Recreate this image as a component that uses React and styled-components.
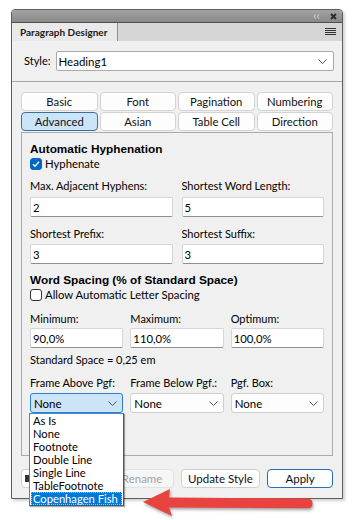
import React from "react";
import styled, { createGlobalStyle } from "styled-components";

const GlobalStyle = createGlobalStyle`
  html, body { margin: 0; padding: 0; background: #ffffff; }
  body { font-family: Lato, "Liberation Sans", sans-serif; font-size: 11px; color: #000; }
  * { box-sizing: border-box; }
`;

const Page = styled.div`
  position: relative;
  width: 353px;
  height: 520px;
  padding: 9px 0 0 11px;
  overflow: hidden;
`;

const Window = styled.div`
  width: 332px;
  height: 490px;
  border: 1px solid #5e5e5e;
  border-radius: 4px 4px 0 0;
  background: #f0f0f0;
  display: flex;
  flex-direction: column;
  box-shadow: 2px 2px 3px rgba(0, 0, 0, 0.18);
`;

const TitleBar = styled.div`
  height: 13px;
  background: linear-gradient(#a3a3a3, #898989);
  border-bottom: 1px solid #4f4f4f;
  border-radius: 3px 3px 0 0;
  display: flex;
  align-items: center;
  justify-content: flex-end;
  gap: 10px;
  padding-right: 5px;
`;

const TabStrip = styled.div`
  height: 18px;
  background: #d6d6d6;
  display: flex;
  align-items: stretch;
`;

const PanelTab = styled.div`
  width: 106px;
  background: #e9e9e9;
  border-right: 1px solid #8c8c8c;
  padding-left: 8px;
  display: flex;
  align-items: center;
  font-family: Lato, "Liberation Sans", sans-serif;
  font-weight: 700;
  font-size: 10px;
  color: #1a1a1a;
`;

const MenuButton = styled.div`
  margin-left: auto;
  margin-right: 6px;
  display: flex;
  align-items: center;
`;

const StyleRow = styled.div`
  display: flex;
  align-items: center;
  gap: 5px;
  padding: 10px 8px 10px 12px;
`;

const RowLabel = styled.span`
  line-height: 14px;
`;

const Combo = styled.div`
  flex: 1;
  height: 20px;
  background: #ffffff;
  border: 1px solid #a9a9a9;
  border-radius: 2px;
  display: flex;
  align-items: center;
  justify-content: space-between;
  padding: 0 6px 0 2px;
  font-size: 11.5px;
`;

const Separator = styled.div`
  height: 1px;
  background: #a8a8a8;
`;

const TabGrid = styled.div`
  display: grid;
  grid-template-columns: repeat(4, 1fr);
  grid-auto-rows: 19px;
  gap: 1px 2px;
  margin: 10px 9px 0;
`;

const TabButton = styled.div`
  border: 1px solid ${(p) => (p.$active ? "#3a6f9f" : "#d3d3d3")};
  background: ${(p) => (p.$active ? "#cce4f7" : "#fdfdfd")};
  border-radius: 4px;
  display: flex;
  align-items: center;
  justify-content: center;
  font-size: 11.3px;
  color: #111;
`;

const ContentBox = styled.div`
  margin: 1px 9px 0;
  height: 324px;
  border: 1px solid #ababab;
  padding: 9px 8px 0;
  display: flex;
  flex-direction: column;
`;

const Heading = styled.div`
  font-family: "Liberation Sans", Arial, sans-serif;
  font-weight: 700;
  font-size: 11.8px;
  line-height: 14px;
  margin-top: ${(p) => p.$mt || 0}px;
`;

const CheckRow = styled.label`
  display: flex;
  align-items: center;
  gap: 3px;
  line-height: 14px;
  margin-top: 1px;
  font-size: 11.3px;
`;

const Box = styled.span`
  width: 12px;
  height: 12px;
  border-radius: 3px;
  display: inline-flex;
  align-items: center;
  justify-content: center;
  background: ${(p) => (p.$checked ? "#0067c0" : "#ffffff")};
  border: 1px solid ${(p) => (p.$checked ? "#0067c0" : "#333333")};
`;

const FieldGrid = styled.div`
  display: grid;
  grid-template-columns: repeat(${(p) => p.$cols}, 1fr);
  column-gap: ${(p) => (p.$cols === 2 ? 9 : 7)}px;
  margin-top: ${(p) => p.$mt}px;
`;

const Field = styled.div`
  display: flex;
  flex-direction: column;
  position: relative;
`;

const FieldLabel = styled.span`
  line-height: 14px;
  white-space: nowrap;
`;

const TextBox = styled.div`
  height: 20px;
  margin-top: ${(p) => p.$gap}px;
  background: #ffffff;
  border: 1px solid #d6d6d6;
  border-bottom-color: #8f8f8f;
  border-radius: 2px;
  padding-left: 2px;
  display: flex;
  align-items: center;
  font-size: 11.3px;
`;

const SelectBox = styled.div`
  height: 20px;
  margin-top: 3px;
  background: ${(p) => (p.$open ? "#cce4f7" : "#fdfdfd")};
  border: 1px solid ${(p) => (p.$open ? "#2c7fd0" : "#d0d0d0")};
  border-radius: 3px;
  padding: 0 5px 0 3px;
  display: flex;
  align-items: center;
  justify-content: space-between;
  font-size: 11.5px;
`;

const PlainText = styled.div`
  line-height: 14px;
  margin-top: 5px;
`;

const DropList = styled.ul`
  position: absolute;
  top: 100%;
  left: -1px;
  width: 95px;
  margin: 0;
  padding: 0 1px;
  list-style: none;
  background: #ffffff;
  border: 1px solid #4a86c0;
  border-right-color: #2f5f8f;
  border-bottom-color: #2f5f8f;
  box-shadow: 1px 1px 1px rgba(0, 0, 0, 0.35);
  z-index: 5;
`;

const DropItem = styled.li`
  height: 13px;
  line-height: 13px;
  padding-left: 2px;
  font-size: 11.2px;
  white-space: nowrap;
  overflow: hidden;
  color: ${(p) => (p.$sel ? "#ffffff" : "#000000")};
  background: ${(p) => (p.$sel ? "#0078d7" : "transparent")};
  outline: ${(p) => (p.$sel ? "1px dotted #9fc8ee" : "none")};
  outline-offset: -1px;
`;

const ButtonRow = styled.div`
  display: flex;
  gap: 7px;
  margin: 13px 9px 0;
  height: 19px;
`;

const Button = styled.div`
  width: ${(p) => p.$w}px;
  height: 19px;
  border-radius: 4px;
  border: 1px solid ${(p) => (p.$primary ? "#2a6fb5" : p.$disabled ? "#e2e2e2" : "#d0d0d0")};
  background: ${(p) => (p.$disabled ? "#f6f6f6" : "#fefefe")};
  color: ${(p) => (p.$disabled ? "#a3a3a3" : "#111")};
  display: flex;
  align-items: center;
  justify-content: ${(p) => (p.$icon ? "flex-start" : "center")};
  padding-left: ${(p) => (p.$icon ? 2 : 0)}px;
  font-size: 11.5px;
`;

const Arrow = styled.svg`
  position: absolute;
  left: 136px;
  top: 483px;
  overflow: visible;
  filter: drop-shadow(1px 2px 1.5px rgba(0, 0, 0, 0.35));
`;

const Chevron = () => (
  <svg width="9" height="5" viewBox="0 0 9 5">
    <path d="M0.5 0.5 L4.5 4.5 L8.5 0.5" fill="none" stroke="#555" strokeWidth="1" />
  </svg>
);

const Check = () => (
  <svg width="10" height="10" viewBox="0 0 10 10">
    <path d="M2 5.2 L4 7.2 L8 2.8" fill="none" stroke="#fff" strokeWidth="1.3" />
  </svg>
);

const items = ["As Is", "None", "Footnote", "Double Line", "Single Line", "TableFootnote", "Copenhagen Fish"];

export default function App() {
  return (
    <Page>
      <GlobalStyle />
      <Window>
        <TitleBar>
          <svg width="7" height="5" viewBox="0 0 7 5">
            <path d="M3 0.5 L0.8 2.5 L3 4.5 M6.2 0.5 L4 2.5 L6.2 4.5" fill="none" stroke="#cfcfcf" strokeWidth="1" />
          </svg>
          <svg width="7" height="7" viewBox="0 0 7 7">
            <path d="M1 1 L6 6 M6 1 L1 6" fill="none" stroke="#2a2a2a" strokeWidth="1.8" />
          </svg>
        </TitleBar>
        <TabStrip>
          <PanelTab>Paragraph Designer</PanelTab>
          <MenuButton>
            <svg width="11" height="8" viewBox="0 0 11 8">
              <path d="M0 0.5 H11 M0 2.5 H11 M0 4.5 H11 M0 6.5 H11" stroke="#333" strokeWidth="1" />
            </svg>
          </MenuButton>
        </TabStrip>
        <StyleRow>
          <RowLabel>Style:</RowLabel>
          <Combo>
            <span>Heading1</span>
            <Chevron />
          </Combo>
        </StyleRow>
        <Separator />
        <TabGrid>
          {["Basic", "Font", "Pagination", "Numbering", "Advanced", "Asian", "Table Cell", "Direction"].map((t) => (
            <TabButton key={t} $active={t === "Advanced"}>{t}</TabButton>
          ))}
        </TabGrid>
        <ContentBox>
          <Heading>Automatic Hyphenation</Heading>
          <CheckRow>
            <Box $checked><Check /></Box>
            <span>Hyphenate</span>
          </CheckRow>
          <FieldGrid $cols={2} $mt={8}>
            <Field>
              <FieldLabel>Max. Adjacent Hyphens:</FieldLabel>
              <TextBox $gap={4}>2</TextBox>
            </Field>
            <Field>
              <FieldLabel>Shortest Word Length:</FieldLabel>
              <TextBox $gap={4}>5</TextBox>
            </Field>
          </FieldGrid>
          <FieldGrid $cols={2} $mt={10}>
            <Field>
              <FieldLabel>Shortest Prefix:</FieldLabel>
              <TextBox $gap={3}>3</TextBox>
            </Field>
            <Field>
              <FieldLabel>Shortest Suffix:</FieldLabel>
              <TextBox $gap={3}>3</TextBox>
            </Field>
          </FieldGrid>
          <Heading $mt={9}>Word Spacing (% of Standard Space)</Heading>
          <CheckRow>
            <Box />
            <span>Allow Automatic Letter Spacing</span>
          </CheckRow>
          <FieldGrid $cols={3} $mt={10}>
            <Field>
              <FieldLabel>Minimum:</FieldLabel>
              <TextBox $gap={2}>90,0%</TextBox>
            </Field>
            <Field>
              <FieldLabel>Maximum:</FieldLabel>
              <TextBox $gap={2}>110,0%</TextBox>
            </Field>
            <Field>
              <FieldLabel>Optimum:</FieldLabel>
              <TextBox $gap={2}>100,0%</TextBox>
            </Field>
          </FieldGrid>
          <PlainText>Standard Space = 0,25 em</PlainText>
          <FieldGrid $cols={3} $mt={9}>
            <Field>
              <FieldLabel>Frame Above Pgf:</FieldLabel>
              <SelectBox $open>
                <span>None</span>
                <Chevron />
              </SelectBox>
              <DropList>
                {items.map((it) => (
                  <DropItem key={it} $sel={it === "Copenhagen Fish"}>{it}</DropItem>
                ))}
              </DropList>
            </Field>
            <Field>
              <FieldLabel>Frame Below Pgf.:</FieldLabel>
              <SelectBox>
                <span>None</span>
                <Chevron />
              </SelectBox>
            </Field>
            <Field>
              <FieldLabel>Pgf. Box:</FieldLabel>
              <SelectBox>
                <span>None</span>
                <Chevron />
              </SelectBox>
            </Field>
          </FieldGrid>
        </ContentBox>
        <ButtonRow>
          <Button $w={83} $icon>
            <svg width="8" height="9" viewBox="0 0 8 9">
              <path d="M1 1 H5 L7 3 V8 H1 Z" fill="#333" />
            </svg>
          </Button>
          <Button $w={63} $disabled>Rename</Button>
          <Button $w={80}>Update Style</Button>
          <Button $w={66} $primary>Apply</Button>
        </ButtonRow>
      </Window>
      <Arrow width="180" height="38" viewBox="0 0 180 38">
        <path
          d="M7 19 L34 6 L33 14.5 L172 15.5 Q176.5 15.8 176.5 20.5 Q176.5 25.2 172 25.2 L33 24.5 L36 33 Z"
          fill="#e8433f"
        />
      </Arrow>
    </Page>
  );
}
